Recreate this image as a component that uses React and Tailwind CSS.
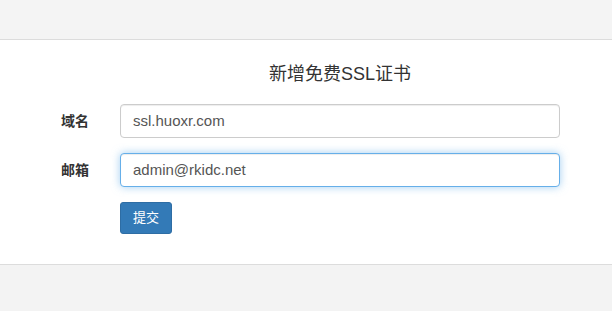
export default function App() {
  const font = { fontFamily: '"Liberation Sans", "Noto Sans CJK SC", sans-serif' };
  return (
    <div className="w-[612px] h-[311px] bg-[#f3f3f3] text-[#333]" style={font}>
      <div className="h-[40px] bg-[#f4f4f4] border-b border-[#dcdcdc]" />
      <div className="h-[225px] bg-white border-b border-[#dcdcdc]">
        <div className="flex pt-[24px]">
          <div className="w-[120px] shrink-0" />
          <div className="w-[440px] text-center text-[18px] leading-[20px] text-[#333]">新增免费SSL证书</div>
        </div>
        <div className="flex flex-col gap-[15px] mt-[20px]">
          <div className="flex items-center">
            <div className="w-[120px] shrink-0 pl-[61px] text-[14px] font-bold text-[#333]">域名</div>
            <div className="w-[440px] h-[34px] rounded-[4px] border border-[#ccc] bg-white px-[12px] flex items-center text-[15px] text-[#555] shadow-[inset_0_1px_1px_rgba(0,0,0,0.075)]">ssl.huoxr.com</div>
          </div>
          <div className="flex items-center">
            <div className="w-[120px] shrink-0 pl-[61px] text-[14px] font-bold text-[#333]">邮箱</div>
            <div className="w-[440px] h-[34px] rounded-[4px] border border-[#66afe9] bg-white px-[12px] flex items-center text-[15px] text-[#555] shadow-[inset_0_1px_1px_rgba(0,0,0,0.075),0_0_8px_rgba(102,175,233,0.6)]">admin@rkidc.net</div>
          </div>
          <div className="flex">
            <div className="w-[120px] shrink-0" />
            <div className="w-[52px] h-[32px] rounded-[3px] bg-[#337ab7] border border-[#2e6da4] text-white text-[13px] flex items-center justify-center">提交</div>
          </div>
        </div>
      </div>
    </div>
  );
}
